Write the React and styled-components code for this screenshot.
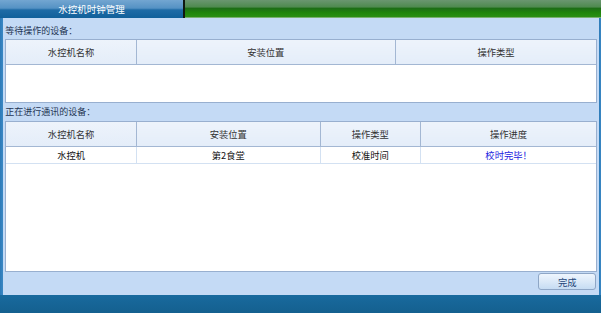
import React from "react";
import styled, { createGlobalStyle } from "styled-components";

const GlobalStyle = createGlobalStyle`
  html, body {
    margin: 0;
    padding: 0;
    background: #166497;
  }
  * {
    box-sizing: border-box;
  }
`;

const Window = styled.div`
  width: 601px;
  height: 313px;
  display: flex;
  flex-direction: column;
  font-family: "Noto Sans CJK SC", "Noto Sans", sans-serif;
  font-size: 9.3px;
  overflow: hidden;
`;

const TopBar = styled.div`
  height: 18px;
  display: flex;
`;

const Tab = styled.div`
  width: 183px;
  display: flex;
  align-items: center;
  justify-content: center;
  color: #ffffff;
  font-size: 9.5px;
  background: linear-gradient(#73a6d1 0%, #5592c4 45%, #1f6ba6 55%, #11609a 100%);
`;

const Divider = styled.div`
  width: 2px;
  background: #101810;
`;

const GreenBar = styled.div`
  flex: 1;
  background: linear-gradient(#6a9670 0%, #4f8a50 40%, #1d6e16 50%, #1f860c 75%, #2a8f14 100%);
  border-bottom: 1px solid #79b070;
`;

const Body = styled.div`
  flex: 1;
  display: flex;
`;

const SideStrip = styled.div`
  width: ${(p) => p.$width}px;
  background: linear-gradient(90deg, #2c7ab8, #3b88c4);
`;

const Panel = styled.div`
  flex: 1;
  background: #c4daf5;
  padding: 0 2px;
  display: flex;
  flex-direction: column;
`;

const SectionLabel = styled.div`
  height: ${(p) => p.$height}px;
  padding-top: ${(p) => p.$top}px;
  line-height: 14px;
  color: #1f3553;
  font-size: 9px;
`;

const TableBox = styled.div`
  height: ${(p) => p.$height}px;
  background: #ffffff;
  border: 1px solid #98afcf;
  overflow: hidden;
`;

const Grid = styled.table`
  width: 100%;
  border-collapse: collapse;
  table-layout: fixed;
`;

const HeadCell = styled.th`
  height: 24px;
  padding: 0;
  font-weight: normal;
  color: #333;
  background: linear-gradient(#edf3fb, #e4edf9);
  border-right: 1px solid #a3b7d3;
  border-bottom: 1px solid #a3b7d3;
  text-align: center;
  &:last-child {
    border-right: none;
  }
`;

const Cell = styled.td`
  height: 17px;
  padding: 0;
  text-align: center;
  color: ${(p) => (p.$done ? "#2323e0" : "#111")};
  border-right: 1px solid #d3e1f2;
  border-bottom: 1px solid #d3e1f2;
  &:last-child {
    border-right: none;
  }
`;

const Footer = styled.div`
  flex: 1;
  display: flex;
  justify-content: flex-end;
  align-items: flex-start;
  padding-top: 1px;
  padding-right: 1px;
`;

const DoneButton = styled.button`
  width: 58px;
  height: 17px;
  padding: 0;
  font-family: inherit;
  font-size: 9.3px;
  color: #26477a;
  border: 1px solid #8ea6c6;
  border-radius: 3px;
  background: linear-gradient(#eef5fd 0%, #dbe9f8 50%, #c6dcf3 100%);
`;

const BottomBar = styled.div`
  height: 18px;
  background: linear-gradient(#196a9e, #14608f);
`;

const waitingCols = [
  { title: "水控机名称", width: 130 },
  { title: "安装位置", width: 259 },
  { title: "操作类型", width: 201 },
];

const runningCols = [
  { title: "水控机名称", width: 130 },
  { title: "安装位置", width: 184 },
  { title: "操作类型", width: 100 },
  { title: "操作进度", width: 176 },
];

const runningRows = [
  { name: "水控机", place: "第2食堂", type: "校准时间", progress: "校时完毕！" },
];

const DataTable = ({ cols, height, children }) => (
  <TableBox $height={height}>
    <Grid>
      <colgroup>
        {cols.map((c) => (
          <col key={c.title} style={{ width: c.width }} />
        ))}
      </colgroup>
      <thead>
        <tr>
          {cols.map((c) => (
            <HeadCell key={c.title}>{c.title}</HeadCell>
          ))}
        </tr>
      </thead>
      <tbody>{children}</tbody>
    </Grid>
  </TableBox>
);

export default function App() {
  return (
    <Window>
      <GlobalStyle />
      <TopBar>
        <Tab>水控机时钟管理</Tab>
        <Divider />
        <GreenBar />
      </TopBar>
      <Body>
        <SideStrip $width={4} />
        <Panel>
          <SectionLabel $height={21} $top={6}>
            等待操作的设备：
          </SectionLabel>
          <DataTable cols={waitingCols} height={64} />
          <SectionLabel $height={18} $top={2}>
            正在进行通讯的设备：
          </SectionLabel>
          <DataTable cols={runningCols} height={151}>
            {runningRows.map((r) => (
              <tr key={r.name}>
                <Cell>{r.name}</Cell>
                <Cell>{r.place}</Cell>
                <Cell>{r.type}</Cell>
                <Cell $done>{r.progress}</Cell>
              </tr>
            ))}
          </DataTable>
          <Footer>
            <DoneButton>完成</DoneButton>
          </Footer>
        </Panel>
        <SideStrip $width={2} />
      </Body>
      <BottomBar />
    </Window>
  );
}
